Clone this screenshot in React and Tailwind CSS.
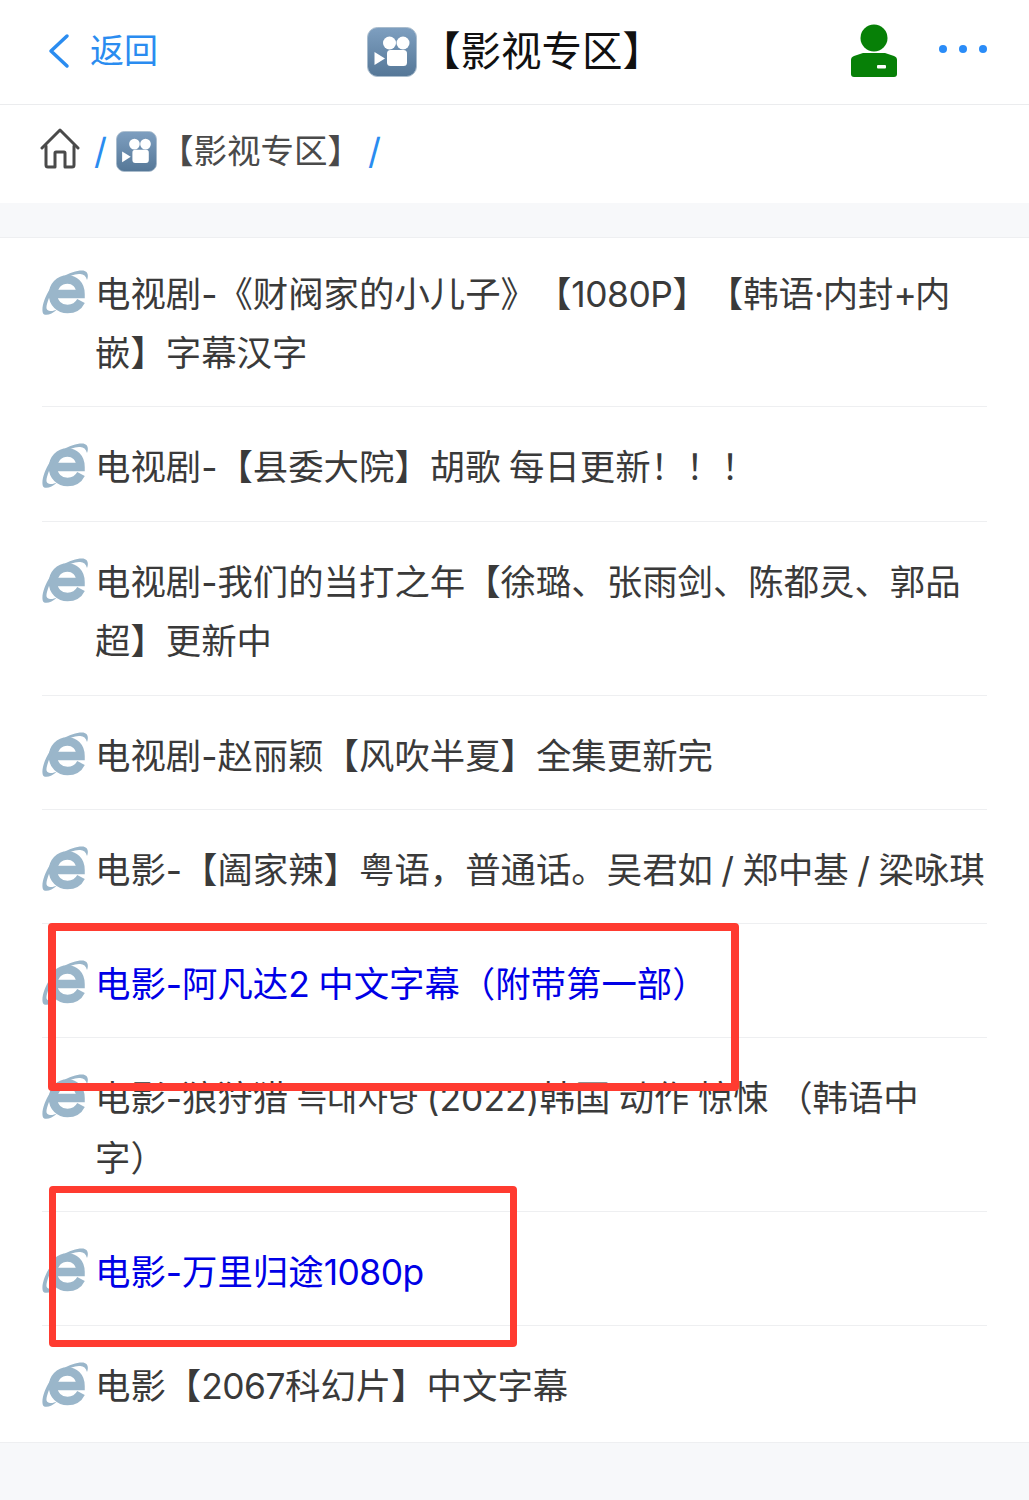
import React from "react";

const Camera = ({ size, id }) => (
  <svg width={size} height={size} viewBox="0 0 50 50" className="shrink-0">
    <defs>
      <linearGradient id={id} x1="0" y1="0" x2="0" y2="1">
        <stop offset="0" stopColor="#7e9fc0" />
        <stop offset="1" stopColor="#557797" />
      </linearGradient>
    </defs>
    <rect x="0.5" y="0.5" width="49" height="49" rx="10" fill={`url(#${id})`} stroke="#a9bccd" />
    <circle cx="22.500" cy="16" r="6.500" fill="#fff" />
    <circle cx="36" cy="16" r="6.500" fill="#fff" />
    <rect x="20" y="23" width="20" height="16" rx="3.500" fill="#fff" />
    <path d="M7.500 25 L18 31.500 L7.500 38 Z" fill="#fff" />
  </svg>
);

const IE = () => (
  <svg width="46" height="46" viewBox="0 0 46 46" className="shrink-0 mr-[9px] mt-[5px]">
    <path d="M13 24 H38.500 C38.500 14 32 9.500 25.500 9.500 C17 9.500 11 16 11 24.500 C11 33 17.500 39 25.500 39 C32 39 36.500 36 39 31" fill="none" stroke="#9ab6ca" strokeWidth="8.500" />
    <path d="M1.500 44 C-1.500 40 2 28 8 19 C14 10 28 0.500 40 0.500 C45.500 0.500 47 5 45 10 C44 5.500 41 3.500 37 4 C32 4.500 26 6 20 10 C12 16 7 26 5 34 C4 38 4 40.500 8 41 C10 41.300 13 40.500 15 39.500 C10 44.500 4 46 1.500 44 Z" fill="#9ab6ca" />
  </svg>
);

const Row = ({ children, blue, first, last, tall }) => (
  <div className={`flex items-start border-[#eeeff1] ${first ? "pt-[27px] pb-[23px]" : tall ? "pt-[31px] pb-[24px]" : "pt-[31px] pb-[23px]"} ${last ? "" : "border-b"}`}>
    <IE />
    <div className={`flex-1 -ml-[2px] text-[35.400px] leading-[59px] [word-spacing:-1.500px] [text-spacing-trim:space-all] ${blue ? "text-[#0000e6]" : "text-[#3a3a3a]"}`}>{children}</div>
  </div>
);

const Tight = ({ children }) => <span className="tracking-[-0.500px]">{children}</span>;

export default function App() {
  return (
    <div className="h-[1500px] overflow-hidden bg-[#f7f8fa] relative" style={{ fontFamily: '"Inter","Noto Sans CJK SC",sans-serif' }}>
      <header className="h-[105px] bg-white border-b border-[#ebecee] flex items-center">
        <div className="w-[367px] flex items-center pl-[48px] mb-[3px] text-[#2a8cf0]">
          <svg width="22" height="36" viewBox="0 0 22 36" fill="none" stroke="#2a8cf0" strokeWidth="3.500" strokeLinecap="round" strokeLinejoin="round">
            <path d="M19 3 L3 18 L19 33" />
          </svg>
          <span className="ml-[20px] text-[34px] leading-none">返回</span>
        </div>
        <div className="flex-1 flex items-center">
          <Camera size={50} id="g1" />
          <span className="ml-[3px] text-[40.500px] leading-none text-[#111]">【影视专区】</span>
        </div>
        <svg width="48" height="54" viewBox="0 0 48 54" className="mr-[41px] mb-[3px]">
          <circle cx="24" cy="14" r="13.500" fill="#078007" />
          <path d="M1 36 Q1 33 4 32 L13 29 H35 L44 32 Q47 33 47 36 V50 Q47 53 44 53 H4 Q1 53 1 50 Z" fill="#078007" />
          <rect x="27" y="41" width="9" height="3.500" rx="1" fill="#fff" />
        </svg>
        <div className="flex gap-[12px] mr-[42px] mb-[6px]">
          <span className="w-[8px] h-[8px] rounded-full bg-[#2a8cf8]" />
          <span className="w-[8px] h-[8px] rounded-full bg-[#2a8cf8]" />
          <span className="w-[8px] h-[8px] rounded-full bg-[#2a8cf8]" />
        </div>
      </header>

      <nav className="h-[98px] bg-white flex items-center pl-[40px] pb-[6px]">
        <svg width="40" height="42" viewBox="0 0 40 42" fill="none" stroke="#4a4a4a" strokeWidth="3" strokeLinejoin="round" strokeLinecap="round" className="mb-[4px]">
          <path d="M2 20 L20 2 L38 20" />
          <path d="M6 18 V37 Q6 39 8 39 H15 V25 Q15 24 16 24 H24 Q25 24 25 25 V39 H32 Q34 39 34 37 V18" />
        </svg>
        <span className="ml-[14px] text-[36px] leading-none text-[#2a8cf0]">/</span>
        <span className="ml-[9px]"><Camera size={41} id="g2" /></span>
        <span className="ml-[3px] mt-[2px] text-[33.500px] leading-none text-[#4a4a4a] whitespace-nowrap">【影视专区】</span>
        <span className="ml-[7px] text-[36px] leading-none text-[#2a8cf0]">/</span>
      </nav>

      <div className="mt-[34px] bg-white border-y border-[#eeeff1] px-[42px] h-[1206px]">
        <Row first>电视剧-《财阀家的小儿子》【<Tight>1080P</Tight>】【韩语<span className="tracking-[-1.500px]">·</span>内封<span className="tracking-[-2px]">+</span>内<br />嵌】字幕汉字</Row>
        <Row tall>电视剧-【县委大院】胡歌 每日更新！！！</Row>
        <Row tall>电视剧-我们的当打之年【徐璐、张雨剑、陈都灵、郭品<br />超】更新中</Row>
        <Row>电视剧-赵丽颖【风吹半夏】全集更新完</Row>
        <Row>电影-【阖家辣】粤语，普通话。吴君如 / 郑中基 / 梁咏琪</Row>
        <Row blue>电影-阿凡达2 中文字幕（附带第一部）</Row>
        <Row>电影-狼狩猎 <span className="text-[33px]">늑대사냥</span> (2022)韩国 动作 惊悚 （韩语中<br />字）</Row>
        <Row blue>电影-万里归途<Tight>1080p</Tight></Row>
        <Row last>电影【<Tight>2067</Tight>科幻片】中文字幕</Row>
      </div>

      <div className="absolute left-[48px] top-[923px] w-[691px] h-[168px] border-[8px] border-[#ff3b30] rounded-[4px]" />
      <div className="absolute left-[49px] top-[1186px] w-[468px] h-[161px] border-[7px] border-[#ff3b30] rounded-[4px]" />
    </div>
  );
}
